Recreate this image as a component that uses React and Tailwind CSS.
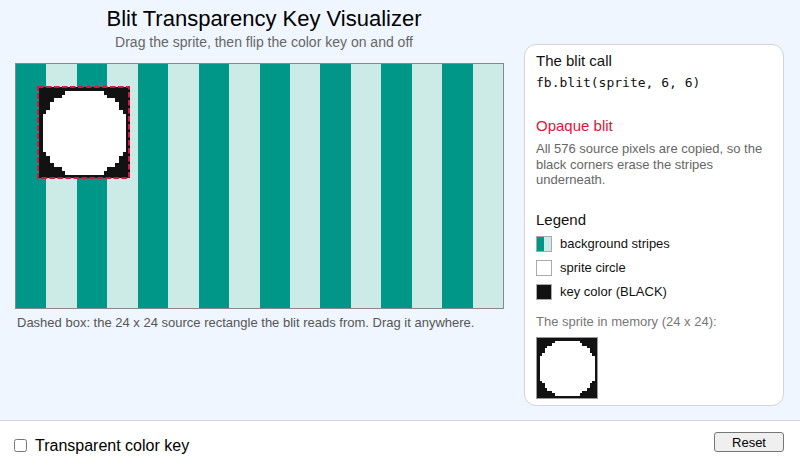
import { useState } from 'react';

const TEAL = '#009688';
const LIGHT = '#ccebe7';
const KEY = '#121212';

// white span [a, b) for each row of the 24 x 24 circle sprite
const spriteRows = Array.from({ length: 24 }, (_, y) => {
  const dy = y + 0.5 - 12;
  const rest = 11.5 * 11.5 - dy * dy;
  if (rest < 0) return null;
  const half = Math.sqrt(rest);
  let a = -1;
  let b = -1;
  for (let x = 0; x < 24; x++) {
    if (Math.abs(x + 0.5 - 12) <= half) {
      if (a < 0) a = x;
      b = x + 1;
    }
  }
  return a < 0 ? null : [a, b];
});

function SpritePixels({ x = 0, y = 0 }) {
  return (
    <g>
      <rect x={x} y={y} width="24" height="24" fill={KEY} />
      {spriteRows.map((r, i) =>
        r ? <rect key={i} x={x + r[0]} y={y + i} width={r[1] - r[0]} height="1" fill="#ffffff" /> : null
      )}
    </g>
  );
}

function Stage({ pos }) {
  return (
    <div className="relative w-[489px] h-[246px] border border-[#888] bg-white">
      <svg width="487" height="244" viewBox="0 0 128 64" preserveAspectRatio="none" shapeRendering="crispEdges" className="block">
        {Array.from({ length: 16 }, (_, i) => (
          <rect key={i} x={i * 8} y="0" width="8" height="64" fill={i % 2 === 0 ? TEAL : LIGHT} />
        ))}
        <SpritePixels x={pos.x} y={pos.y} />
      </svg>
      {/* dashed source rectangle */}
      <svg width="93" height="93" className="absolute left-[21px] top-[22px] cursor-move">
        <rect x="1" y="1" width="91" height="91" fill="none" stroke="#dc143c" strokeWidth="2" strokeDasharray="5.5 2.5" />
      </svg>
    </div>
  );
}

function Swatch({ children, className = '' }) {
  return <span className={`w-4 h-4 border border-[#aaa] flex ${className}`}>{children}</span>;
}

export default function App() {
  const [transparent, setTransparent] = useState(false);
  const pos = { x: 6, y: 6 };

  return (
    <div className="h-[470px] flex flex-col font-['Liberation_Sans',Arial,sans-serif] text-[#111]">
      <main className="flex-1 bg-[#eff6ff] flex pl-[15px] pr-[16px]">
        <section className="w-[498px] flex flex-col">
          <header className="pt-[6px] text-center">
            <h1 className="text-[22px] leading-[26px] text-black">Blit Transparency Key Visualizer</h1>
            <p className="mt-[1px] text-[14px] leading-[18px] text-[#666]">
              Drag the sprite, then flip the color key on and off
            </p>
          </header>
          <div className="mt-[12px]">
            <Stage pos={pos} />
          </div>
          <p className="mt-[6px] pl-[2px] text-[13px] leading-[16px] text-[#555]">
            Dashed box: the 24 x 24 source rectangle the blit reads from. Drag it anywhere.
          </p>
        </section>

        <aside className="ml-[11px] mt-[44px] self-start w-[260px] bg-white border border-[#d4d4d4] rounded-[12px] px-[11px] pt-[7px] pb-[6px]">
          <h2 className="text-[15px] leading-[18px]">The blit call</h2>
          <code className="block mt-[4px] font-['DejaVu_Sans_Mono',monospace] text-[13px] leading-[18px] text-[#111]">
            fb.blit(sprite, 6, 6)
          </code>

          <h3 className="mt-[25px] text-[15px] leading-[18px] text-[#dc143c]">
            {transparent ? 'Transparent blit' : 'Opaque blit'}
          </h3>
          <p className="mt-[6px] text-[13px] leading-[15.6px] text-[#666]">
            All 576 source pixels are copied, so the black corners erase the stripes underneath.
          </p>

          <h3 className="mt-[23px] text-[15px] leading-[18px]">Legend</h3>
          <ul className="mt-[7px] flex flex-col gap-[8px] text-[13px]">
            <li className="flex items-center gap-[8px] h-4">
              <Swatch>
                <span className="flex-1" style={{ background: TEAL }} />
                <span className="flex-1" style={{ background: LIGHT }} />
              </Swatch>
              background stripes
            </li>
            <li className="flex items-center gap-[8px] h-4">
              <Swatch className="bg-white" />
              sprite circle
            </li>
            <li className="flex items-center gap-[8px] h-4">
              <Swatch className="bg-[#121212]" />
              key color (BLACK)
            </li>
          </ul>

          <p className="mt-[14px] text-[13px] leading-[16px] text-[#777]">The sprite in memory (24 x 24):</p>
          <div className="mt-[7px] w-[62px] h-[62px] border border-[#999]">
            <svg width="60" height="60" viewBox="0 0 24 24" shapeRendering="crispEdges" className="block">
              <SpritePixels />
            </svg>
          </div>
        </aside>
      </main>

      <footer className="h-[50px] border-t border-[#d6d6d6] bg-white flex items-center justify-between pl-[14px] pr-[16px]">
        <label className="flex items-center text-[16px] text-black">
          <input
            type="checkbox"
            className="m-0 w-[13px] h-[13px]"
            checked={transparent}
            onChange={(e) => setTransparent(e.target.checked)}
          />
          <span className="ml-[8px]">Transparent color key</span>
        </label>
        <button className="self-start mt-[11px] w-[70px] h-[20px] text-[13px] leading-none bg-[#efefef] border border-[#767676] rounded-[3px] text-black">
          Reset
        </button>
      </footer>
    </div>
  );
}
